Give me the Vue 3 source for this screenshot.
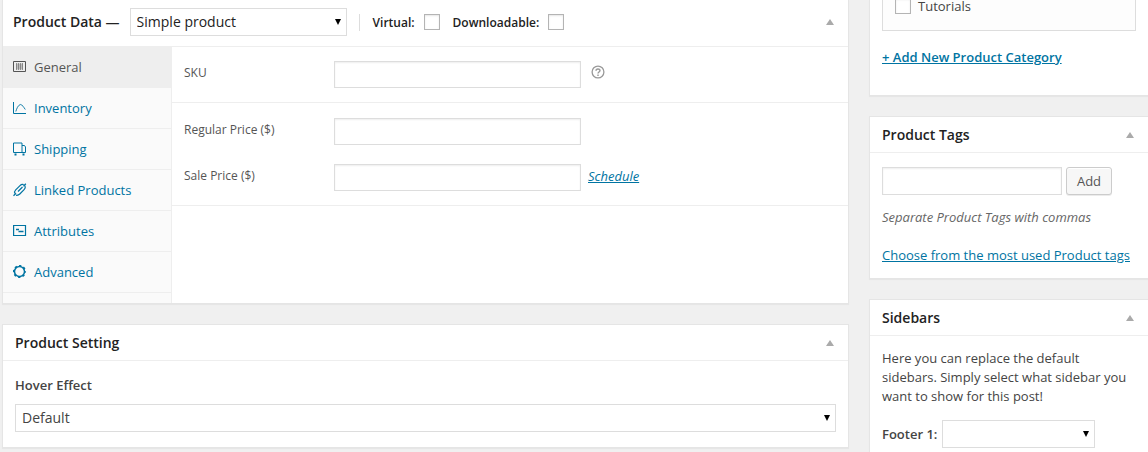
<script setup>
import { ref } from 'vue'

const tabs = [
  { id: 'general', label: 'General' },
  { id: 'inventory', label: 'Inventory' },
  { id: 'shipping', label: 'Shipping' },
  { id: 'linked', label: 'Linked Products' },
  { id: 'attributes', label: 'Attributes' },
  { id: 'advanced', label: 'Advanced' },
]
const active = ref('general')
const productType = ref('simple')
const hoverEffect = ref('default')
const virtual = ref(false)
const downloadable = ref(false)
const tutorials = ref(false)
const footer = ref('')
</script>

<template>
  <div class="page">
    <main class="column">
      <section class="box">
        <header class="head data-head">
          <h2>Product Data —</h2>
          <span class="select type-select">
            <select v-model="productType" aria-label="Product type">
              <option value="simple">Simple product</option>
              <option value="grouped">Grouped product</option>
            </select>
          </span>
          <div class="flags">
            <label>Virtual: <input v-model="virtual" type="checkbox" /></label>
            <label>Downloadable: <input v-model="downloadable" type="checkbox" /></label>
          </div>
          <button class="toggle" type="button" aria-label="Toggle Product Data"></button>
        </header>
        <div class="data">
          <nav class="tabs">
            <a
              v-for="tab in tabs"
              :key="tab.id"
              href="#"
              :class="{ active: active === tab.id }"
              @click.prevent="active = tab.id"
            >
              <svg viewBox="0 0 14 14" fill="none" stroke="currentColor" aria-hidden="true">
                <template v-if="tab.id === 'general'">
                  <path d="M.5 1.500h12v10H.5z" />
                  <path d="M3 3.500h7v6H3z" fill="currentColor" stroke="none" opacity=".3" />
                  <path d="M3.500 3v7M5.500 3v7M7.500 3v7M9.500 3v7" opacity=".55" />
                </template>
                <template v-else-if="tab.id === 'inventory'">
                  <path d="M.5 1v11.500H13" />
                  <path d="M2.800 10.500C3.800 7.500 4.800 4.500 7.300 3.500c2.500.5 3.200 2.500 5 5" stroke-width=".9" />
                </template>
                <template v-else-if="tab.id === 'shipping'">
                  <path d="M.5 1h8.500v9.500H.5zM9 3.500h2.500l1 1.500v5.500H9" />
                  <path d="M1.500 12.500h2M9.500 12.500h2" stroke-width="2" />
                </template>
                <template v-else-if="tab.id === 'linked'">
                  <path d="M.5 12.800 3 10.300M10.500 3.200 12.800.7" stroke-width="1.300" />
                  <path d="M2 10.500C1.200 9.300 1.500 8 2.700 6.800L7 2.600C8.200 1.400 9.500 1.200 10.700 1.600M5 8.500 9.500 4" stroke-width="1.200" />
                  <path d="M3 12.200c1.500.3 2.700-.1 3.800-1.200l4.300-4.300C12.300 5.500 12.600 4.300 12 2.800" stroke-width="1.200" />
                </template>
                <template v-else-if="tab.id === 'attributes'">
                  <path d="M.6 1.500h11.900v10H.6z" stroke-width="1.200" />
                  <path d="M3 5.500h3M5.500 7.500h5" stroke-width="1.500" />
                </template>
                <template v-else>
                  <circle cx="6.500" cy="6.500" r="5" stroke-width="1.500" />
                  <circle cx="6.500" cy="6.500" r="5.700" stroke-width="1.700" stroke-dasharray="2.238 2.238" stroke-dashoffset="1.119" />
                </template>
              </svg>
              {{ tab.label }}
            </a>
          </nav>
          <form class="fields" @submit.prevent>
            <div class="group">
              <div class="field">
                <label for="sku">SKU</label>
                <input id="sku" type="text" />
                <button class="help" type="button" aria-label="Help">
                  <svg viewBox="0 0 14 14" fill="none" stroke="currentColor" aria-hidden="true">
                    <circle cx="7" cy="7" r="5.900" stroke-width="1.300" />
                    <path d="M5 5.700C5 3.400 9 3.400 9 5.600 9 7 7 7 7 8.500M7 9.500v1.400" stroke-width="1.400" />
                  </svg>
                </button>
              </div>
            </div>
            <div class="group">
              <div class="field">
                <label for="regular">Regular Price ($)</label>
                <input id="regular" type="text" />
              </div>
              <div class="field">
                <label for="sale">Sale Price ($)</label>
                <input id="sale" type="text" />
                <a class="schedule" href="#">Schedule</a>
              </div>
            </div>
          </form>
        </div>
      </section>

      <section class="box">
        <header class="head">
          <h2>Product Setting</h2>
          <button class="toggle" type="button" aria-label="Toggle Product Setting"></button>
        </header>
        <div class="setting">
          <label for="hover">Hover Effect</label>
          <span class="select">
            <select id="hover" v-model="hoverEffect">
              <option value="default">Default</option>
            </select>
          </span>
        </div>
      </section>
    </main>

    <aside class="column">
      <section class="box side">
        <div class="categories">
          <div class="list">
            <label><input v-model="tutorials" type="checkbox" />Tutorials</label>
          </div>
          <a class="add-category" href="#">+ Add New Product Category</a>
        </div>
      </section>

      <section class="box side">
        <header class="head">
          <h2>Product Tags</h2>
          <button class="toggle" type="button" aria-label="Toggle Product Tags"></button>
        </header>
        <div class="tags">
          <div class="tag-row">
            <input type="text" aria-label="New product tag" />
            <button class="add" type="button">Add</button>
          </div>
          <p class="hint">Separate Product Tags with commas</p>
          <a href="#">Choose from the most used Product tags</a>
        </div>
      </section>

      <section class="box side">
        <header class="head">
          <h2>Sidebars</h2>
          <button class="toggle" type="button" aria-label="Toggle Sidebars"></button>
        </header>
        <div class="sidebars">
          <p>Here you can replace the default sidebars. Simply select what sidebar you want to show for this post!</p>
          <div class="footer-row">
            <label for="footer">Footer 1:</label>
            <span class="select">
              <select id="footer" v-model="footer">
                <option value=""></option>
              </select>
            </span>
          </div>
        </div>
      </section>
    </aside>
  </div>
</template>

<style>
body {
  background: #f0f0f0;
  overflow: hidden;
}
</style>

<style scoped>
.page,
.page * {
  box-sizing: border-box;
}
.page {
  display: grid;
  grid-template-columns: minmax(0, 1fr) 279px;
  gap: 20px;
  padding-left: 2px;
  align-items: start;
  font: 13px/19px "Open Sans", "Noto Sans", sans-serif;
  color: #444;
}
.column {
  display: flex;
  flex-direction: column;
  gap: 20px;
}
.box {
  background: #fff;
  border: 1px solid #e5e5e5;
  box-shadow: 0 1px 1px rgba(0, 0, 0, 0.04);
}
.side {
  border-right: 0;
}
.column > .box:first-child {
  border-top: 0;
}
h2,
p {
  margin: 0;
}
a {
  color: #0074a2;
}
.head {
  display: flex;
  align-items: center;
  height: 36px;
  padding: 0 12px;
  border-bottom: 1px solid #eee;
}
h2 {
  font-size: 14px;
  line-height: 20px;
  font-weight: 600;
  color: #222;
}
.data-head {
  height: 47px;
  padding: 0 12px 2px 10px;
}
.toggle {
  width: 12px;
  height: 20px;
  margin-left: auto;
  padding: 0;
  border: 0;
  background: none;
  display: grid;
  place-items: center;
}
.toggle::before {
  content: "";
  border: 4px solid transparent;
  border-top: 0;
  border-bottom: 6px solid #aaa;
}
input,
select,
button {
  font: inherit;
  color: inherit;
  margin: 0;
}
input[type="text"],
select {
  appearance: none;
  border: 1px solid #ddd;
  border-radius: 0;
  background: #fff;
  box-shadow: inset 0 1px 2px rgba(0, 0, 0, 0.07);
}
.select {
  position: relative;
  display: block;
}
.select::after {
  content: "";
  position: absolute;
  right: 6px;
  top: 11px;
  border: 3px solid transparent;
  border-top: 6px solid #000;
  border-bottom: 0;
  pointer-events: none;
}
select {
  display: block;
  width: 100%;
  height: 28px;
  padding: 0 20px 2px 6px;
  font-size: 14px;
  box-shadow: none;
}
input[type="checkbox"] {
  appearance: none;
  width: 16px;
  height: 16px;
  border: 1px solid #b4b4b4;
  background: #fff;
  box-shadow: inset 0 1px 2px rgba(0, 0, 0, 0.1);
}
input[type="checkbox"]:checked {
  background: #0074a2;
}
.type-select {
  width: 217px;
  margin: 0 12px 0 10px;
  color: #222;
}
.flags {
  display: flex;
  gap: 13px;
  height: 17px;
  padding-left: 13px;
  border-left: 1px solid #ddd;
  font-size: 12px;
  font-weight: 600;
  color: #222;
}
.flags label {
  display: flex;
  align-items: center;
  gap: 9px;
}

.data {
  display: grid;
  grid-template-columns: 169px minmax(0, 1fr);
}
.tabs {
  padding-bottom: 10px;
  background: #fafafa;
  border-right: 1px solid #eee;
}
.tabs a {
  display: flex;
  align-items: center;
  gap: 7px;
  height: 41px;
  padding-left: 10px;
  border-bottom: 1px solid #eee;
  text-decoration: none;
}
.tabs svg {
  width: 14px;
  height: 14px;
}
.tabs a.active {
  background: #eee;
  color: #555;
}
.group {
  display: flex;
  flex-direction: column;
  gap: 19px;
  padding: 14px 12px;
  border-bottom: 1px solid #eee;
}
.group + .group {
  padding-top: 15px;
}
.field {
  display: grid;
  grid-template-columns: 150px 247px auto;
  justify-content: start;
  align-items: center;
}
.field label {
  font-size: 12px;
  color: #555;
  padding-bottom: 4px;
}
.field input {
  height: 27px;
}
.help {
  margin-left: 10px;
  padding: 0 0 5px;
  border: 0;
  background: none;
  color: #999;
  display: flex;
}
.help svg {
  width: 14px;
  height: 14px;
}
.schedule {
  margin-left: 7px;
  padding-bottom: 2px;
  font-style: italic;
}

.setting {
  padding: 15px 12px;
}
.setting label {
  display: block;
  margin-bottom: 9px;
  font-weight: 600;
}

.categories {
  padding: 0 12px 28px;
}
.list {
  height: 31px;
  margin-bottom: 17px;
  padding-left: 12px;
  border: 1px solid #ddd;
  border-top: 0;
  background: #fdfdfd;
}
.list label {
  display: flex;
  align-items: center;
  gap: 7px;
  height: 12px;
  line-height: 12px;
}
.add-category {
  display: inline-block;
  font-weight: 600;
}
.tags {
  padding: 14px 12px 13px;
}
.tag-row {
  display: flex;
  gap: 4px;
}
.tag-row input {
  width: 180px;
  height: 28px;
}
.add {
  width: 46px;
  height: 28px;
  padding: 0;
  border: 1px solid #ccc;
  border-radius: 3px;
  background: #f7f7f7;
  box-shadow: inset 0 1px 0 #fff, 0 1px 0 rgba(0, 0, 0, 0.08);
  color: #555;
}
.hint {
  margin: 13px 0 19px;
  font-style: italic;
  color: #666;
}
.sidebars {
  padding: 13px 12px;
}
.footer-row {
  display: flex;
  align-items: center;
  gap: 5px;
  margin-top: 14px;
  font-weight: 600;
}
.footer-row .select {
  width: 153px;
}
</style>
